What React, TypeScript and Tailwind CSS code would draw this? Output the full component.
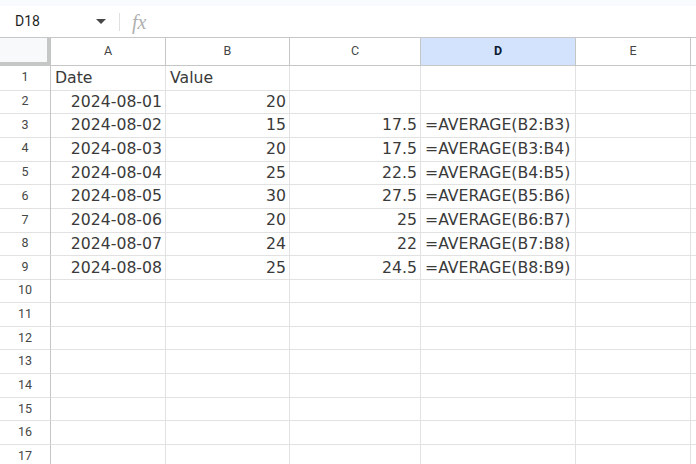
const COLS = ['A', 'B', 'C', 'D', 'E'];

const ROWS: string[][] = [
  ['Date', 'Value', '', ''],
  ['2024-08-01', '20', '', ''],
  ['2024-08-02', '15', '17.5', '=AVERAGE(B2:B3)'],
  ['2024-08-03', '20', '17.5', '=AVERAGE(B3:B4)'],
  ['2024-08-04', '25', '22.5', '=AVERAGE(B4:B5)'],
  ['2024-08-05', '30', '27.5', '=AVERAGE(B5:B6)'],
  ['2024-08-06', '20', '25', '=AVERAGE(B6:B7)'],
  ['2024-08-07', '24', '22', '=AVERAGE(B7:B8)'],
  ['2024-08-08', '25', '24.5', '=AVERAGE(B8:B9)'],
];

const GRID = 'grid grid-cols-[51px_115px_124px_131px_155px_115px_1fr]';

function Cell({ text, align }: { text: string; align: 'left' | 'right' }) {
  return (
    <div
      className={`border-r border-b border-[#e2e2e2] flex items-center overflow-visible whitespace-nowrap ${
        align === 'right' ? 'justify-end pr-[3px]' : 'justify-start pl-[4px]'
      }`}
    >
      {text}
    </div>
  );
}

export default function App() {
  const rows = Array.from({ length: 17 }, (_, i) => ROWS[i] ?? ['', '', '', '']);

  return (
    <div className="w-[696px] h-[464px] overflow-hidden bg-white font-['Roboto',sans-serif]">
      {/* top strip */}
      <div className="h-[6px] bg-[#f8fafd]" />

      {/* formula bar */}
      <div className="h-[32px] flex items-center border-b border-[#c7c7c7]">
        <div className="w-[110px] flex items-center justify-between pl-[15px] pr-[6px]">
          <span className="text-[14px] text-[#1f1f1f]">D18</span>
          <svg width="10" height="6" viewBox="0 0 10 6" className="mr-[-2px]">
            <path d="M0 0h10L5 5z" fill="#444746" />
          </svg>
        </div>
        <div className="w-px h-[18px] bg-[#e0e0e0] ml-[9px]" />
        <span className="ml-[12px] text-[20px] italic text-[#b0b0b0] font-['Liberation_Serif',serif] leading-none">
          fx
        </span>
      </div>

      {/* column headers */}
      <div className={`${GRID} h-[28px] text-[12.5px] text-[#444746]`}>
        <div className="bg-[#f8f9fa] border-r-[4px] border-b-[4px] border-[#c4c7c5]" />
        {COLS.map((c) => (
          <div
            key={c}
            className={`flex items-center justify-center border-r border-b border-[#c4c7c5] ${
              c === 'D' ? 'bg-[#d3e3fd] text-[#0b1a33] font-bold' : 'bg-white'
            }`}
          >
            {c}
          </div>
        ))}
        <div className="border-b border-[#c4c7c5]" />
      </div>

      {/* data rows */}
      <div className="font-['DejaVu_Sans',sans-serif] text-[15.7px] text-[#3a3a3a]">
        {rows.map((r, i) => (
          <div key={i} className={`${GRID} h-[23.7px]`}>
            <div className="flex items-center justify-center border-r border-b border-r-[#c4c7c5] border-b-[#e2e2e2] text-[12.5px] text-[#444746] font-['Roboto',sans-serif]">
              {i + 1}
            </div>
            <Cell text={r[0]} align={i === 0 ? 'left' : 'right'} />
            <Cell text={r[1]} align={i === 0 ? 'left' : 'right'} />
            <Cell text={r[2]} align="right" />
            <Cell text={r[3]} align="left" />
            <Cell text="" align="left" />
            <div className="border-b border-[#e2e2e2]" />
          </div>
        ))}
      </div>
    </div>
  );
}
